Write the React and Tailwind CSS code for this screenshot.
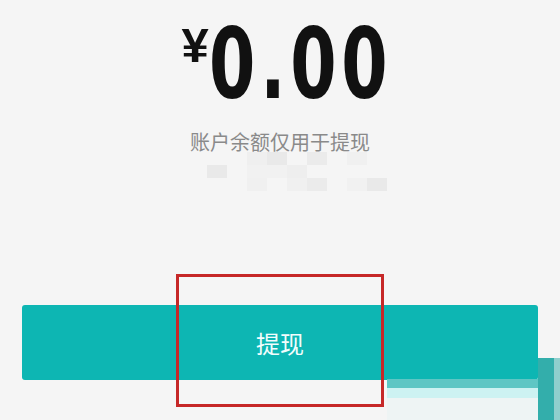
const blocks = [
  "", "", "", "bg-[#efefef]", "bg-[#e9e9e9]", "", "bg-[#ebebeb]", "", "bg-[#f0f0f0]", "",
  "", "bg-[#e9e9e9]", "", "bg-[#f1f1f1]", "bg-[#f1f1f1]", "bg-[#eeeeee]", "", "", "", "",
  "", "", "", "bg-[#f0f0f0]", "", "bg-[#f0f0f0]", "bg-[#ebebeb]", "", "bg-[#f1f1f1]", "bg-[#e9e9e9]",
];

const App = () => {
  return (
    <div className="relative w-[560px] h-[420px] overflow-hidden bg-[#f5f5f5] flex flex-col items-center">
      {/* Amount */}
      <div className="flex items-start pt-[15px] text-[#111]">
        <span className="text-[49px] font-bold leading-none mt-[6px] font-['Liberation_Sans',Arial,sans-serif]">¥</span>
        <span className="text-[98px] font-bold leading-none tracking-[7px] scale-x-[0.68] origin-left -mr-[100px] font-['DejaVu_Sans',sans-serif]">0.00</span>
      </div>

      <p className="mt-[19px] text-[20px] leading-[20px] text-[#8a8a8a] font-['Noto_Sans_CJK_SC',sans-serif]">
        账户余额仅用于提现
      </p>

      {/* blurred info */}
      <div className="ml-[14px] w-[200px] grid grid-cols-10 auto-rows-[13px]">
        {blocks.map((c, i) => (
          <div key={i} className={c} />
        ))}
      </div>

      {/* Withdraw button */}
      <button className="mt-[114px] w-[516px] h-[75px] rounded-[3px] bg-[#0db6b3] text-[#f2fdfd] text-[24px] font-['Noto_Sans_CJK_SC',sans-serif]">
        提现
      </button>

      {/* annotation box */}
      <div className="absolute left-[176px] top-[274px] w-[208px] h-[133px] border-[3px] border-[#c62828]" />

      {/* screenshot remnants bottom right */}
      <div className="absolute left-[387px] top-[379px] w-[151px] h-[9px] bg-[#5ec6c4]" />
      <div className="absolute left-[387px] top-[388px] w-[151px] h-[10px] bg-[#cdf2f2]" />
      <div className="absolute left-[387px] top-[398px] w-[151px] h-[22px] bg-[#eef4f4]" />
      <div className="absolute left-[538px] top-[358px] w-[16px] h-[62px] bg-[#33aeab]" />
      <div className="absolute left-[554px] top-[358px] w-[6px] h-[62px] bg-[#8fcfcd]" />
    </div>
  );
};

export default App;
